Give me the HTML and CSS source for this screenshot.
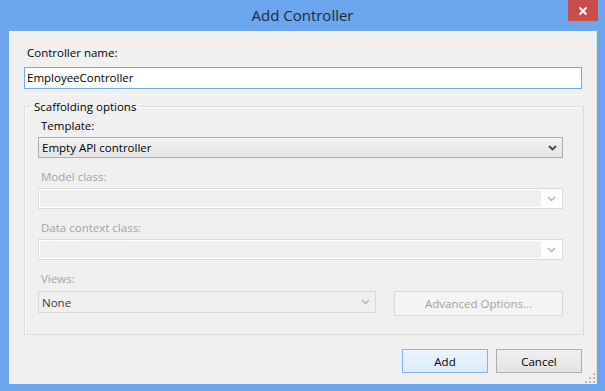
FILE: index.html
```html
<!DOCTYPE html>
<html lang="en">
<head>
  <meta charset="UTF-8" />
  <title>Add Controller</title>
  <link rel="stylesheet" href="styles.css">
</head>
<body>

  <div class="window">
    <div class="titlebar">
      <span></span>
      <div class="title">Add Controller</div>
      <div class="title-controls">
        <button class="close" title="Close">
          <svg width="10" height="10" viewBox="0 0 10 10"><path d="M1.5 1.5 L8.5 8.5 M8.5 1.5 L1.5 8.5" stroke="#fff" stroke-width="2" fill="none"/></svg>
        </button>
      </div>
    </div>

    <div class="client">
      <div class="field-label">Controller name:</div>
      <div class="textbox">EmployeeController</div>

      <fieldset class="group">
        <legend>Scaffolding options</legend>

        <div class="field-label">Template:</div>
        <div class="combo">
          <span class="combo-text">Empty API controller</span>
          <span class="combo-arrow">
            <svg width="9" height="6" viewBox="0 0 9 6"><path d="M1 1 L4.5 4.5 L8 1" stroke="#444" stroke-width="1.8" fill="none"/></svg>
          </span>
        </div>

        <div class="field-label disabled">Model class:</div>
        <div class="combo combo-disabled">
          <span class="combo-text"></span>
          <span class="combo-arrow">
            <svg width="9" height="6" viewBox="0 0 9 6"><path d="M1 1 L4.5 4.5 L8 1" stroke="#b4b4b4" stroke-width="1.4" fill="none"/></svg>
          </span>
        </div>

        <div class="field-label disabled">Data context class:</div>
        <div class="combo combo-disabled">
          <span class="combo-text"></span>
          <span class="combo-arrow">
            <svg width="9" height="6" viewBox="0 0 9 6"><path d="M1 1 L4.5 4.5 L8 1" stroke="#b4b4b4" stroke-width="1.4" fill="none"/></svg>
          </span>
        </div>

        <div class="field-label disabled">Views:</div>
        <div class="views-row">
          <div class="combo combo-views">
            <span class="combo-text">None</span>
            <span class="combo-arrow">
              <svg width="9" height="6" viewBox="0 0 9 6"><path d="M1 1 L4.5 4.5 L8 1" stroke="#b4b4b4" stroke-width="1.4" fill="none"/></svg>
            </span>
          </div>
          <button class="btn btn-disabled">Advanced Options...</button>
        </div>
      </fieldset>

      <div class="actions">
        <button class="btn btn-default">Add</button>
        <button class="btn">Cancel</button>
      </div>

      <div class="grip">
        <svg width="10" height="10" viewBox="0 0 10 10" fill="#b8b8b8">
          <rect x="8" y="0" width="2" height="2"/>
          <rect x="4" y="4" width="2" height="2"/><rect x="8" y="4" width="2" height="2"/>
          <rect x="0" y="8" width="2" height="2"/><rect x="4" y="8" width="2" height="2"/><rect x="8" y="8" width="2" height="2"/>
        </svg>
      </div>
    </div>
  </div>

</body>
</html>
```

FILE: styles.css
```css
* {
  box-sizing: border-box;
}

body {
  margin: 0;
  font-family: 'Open Sans', 'Noto Sans', sans-serif;
  font-size: 11.5px;
  color: #000;
  background: #6ba6ef;
}

.window {
  width: 605px;
  height: 391px;
  background: #6ba6ef;
  padding: 0 8px 7px 9px;
  display: flex;
  flex-direction: column;
}

.titlebar {
  height: 31px;
  margin: 0 -8px 0 -9px;
  display: grid;
  grid-template-columns: 1fr auto 1fr;
}

.title {
  font-size: 15px;
  line-height: 30px;
  color: #1d2a3a;
}

.title-controls {
  display: flex;
  justify-content: flex-end;
  align-items: flex-start;
  padding-right: 7px;
}

.close {
  width: 30px;
  height: 21px;
  border: none;
  padding: 0;
  background: #c74e4a;
  display: flex;
  align-items: center;
  justify-content: center;
}

.client {
  flex: 1;
  position: relative;
  background: #f0f0f0;
  border-right: 1px solid #e2e2e2;
  padding: 14px 14px 0 15px;
}

.field-label {
  line-height: 15px;
  padding-left: 3px;
}

.field-label.disabled {
  color: #a3a3a3;
}

.textbox {
  margin-top: 7px;
  height: 22px;
  border: 1px solid #6fa8de;
  background: #fff;
  line-height: 20px;
  padding-left: 2px;
}

.group {
  margin: 10px 0 0 0;
  padding: 4px 20px 18px 13px;
  border: 1px solid #dcdcdc;
  box-shadow: inset 1px 1px 0 #fff;
  width: 560px;
}

.group legend {
  margin-left: -6px;
  padding: 0 2px;
  line-height: 15px;
}

.group .field-label {
  margin-top: 11px;
}

.group .field-label:first-of-type {
  margin-top: 0;
}

.combo {
  margin-top: 4px;
  height: 21px;
  display: flex;
  align-items: center;
  border: 1px solid #acacac;
  background: linear-gradient(#f2f2f2, #e4e4e4);
}

.combo-text {
  flex: 1;
  padding-left: 3px;
  line-height: 19px;
}

.combo-arrow {
  width: 19px;
  height: 100%;
  display: flex;
  align-items: center;
  justify-content: center;
}

.combo-disabled {
  border-color: #dadada;
  background: #f0f0f0;
  box-shadow: inset 0 0 0 1px #fff;
}

.combo-disabled .combo-arrow {
  background: #fff;
  width: 21px;
}

.views-row {
  margin-top: 5px;
  display: flex;
  gap: 18px;
  align-items: flex-start;
}

.combo-views {
  margin-top: 0;
  flex: 1;
  height: 22px;
  border-color: #d9d9d9;
  background: #efefef;
  color: #3a3a3a;
}

.btn {
  font-family: 'Open Sans', 'Noto Sans', sans-serif;
  font-size: 11.5px;
  height: 24px;
  width: 86px;
  padding: 0;
  border: 1px solid #adadad;
  background: linear-gradient(#efefef, #e3e3e3);
  color: #000;
}

.btn-default {
  border-color: #7eb4ea;
  background: linear-gradient(#ecf4fc, #dcecfc);
}

.btn-disabled {
  width: 169px;
  height: 25px;
  border-color: #d9d9d9;
  background: #f4f4f4;
  color: #a0a0a0;
}

.actions {
  margin-top: 14px;
  display: flex;
  justify-content: flex-end;
  gap: 8px;
}

.grip {
  position: absolute;
  right: 1px;
  bottom: 1px;
  line-height: 0;
}
```
